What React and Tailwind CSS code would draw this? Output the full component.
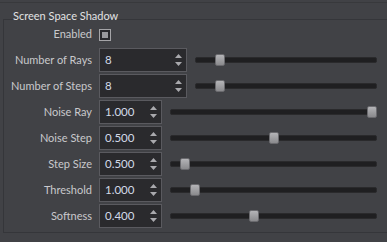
import React from "react";

const font = { fontFamily: "Lato, 'Liberation Sans', sans-serif" };

function Arrows() {
  return (
    <div className="flex flex-col justify-between h-full py-[5px] pr-[4px]">
      <svg width="7" height="4" viewBox="0 0 7 4"><path d="M0 4 L3.5 0 L7 4 Z" fill="#a9a9ad" /></svg>
      <svg width="7" height="4" viewBox="0 0 7 4"><path d="M0 0 L3.5 4 L7 0 Z" fill="#a9a9ad" /></svg>
    </div>
  );
}

function Spin({ value, wide }) {
  return (
    <div
      className={`flex items-center justify-between h-[24px] bg-[#2a2a2d] border border-[#5a5a5f] ${wide ? "w-[88px]" : "w-[63px]"}`}
    >
      <span className="pl-[5px] text-[11.5px] text-[#d3dae8]">{value}</span>
      <Arrows />
    </div>
  );
}

function Track({ frac }) {
  return (
    <div className="relative flex-1 h-[12px] flex items-center mr-[14px]">
      <div className="w-full h-[6px] bg-[#1f1f21] rounded-[2px] border border-[#2a2a2c]" />
      <div
        className="absolute top-0 h-[12px] w-[10px] rounded-[2px] border border-[#6a6a6e] bg-gradient-to-b from-[#b4b4b7] to-[#8a8a8d]"
        style={{ left: `calc((100% - 10px) * ${frac})` }}
      />
    </div>
  );
}

function Row({ label, value, wide, frac }) {
  return (
    <div className="flex items-center h-[26px]">
      <div className="w-[88px] text-right text-[11px] text-[#c9c9cc]">{label}</div>
      <div className="ml-[7px]">
        <Spin value={value} wide={wide} />
      </div>
      <div className="flex-1 flex ml-[8px]">
        <Track frac={frac} />
      </div>
    </div>
  );
}

export default function App() {
  return (
    <div className="w-[387px] h-[242px] bg-[#414246] overflow-hidden relative" style={font}>
      <div className="h-[2px]" />
      <div className="h-[1px] bg-[#38393c]" />
      <div className="pl-[13px] pt-[6px] h-[16px] text-[11px] leading-[14px] text-[#e2e2e4]">Screen Space Shadow</div>
      <div className="ml-[3px] w-[390px] h-[214px] border border-[#35363a]">
        <div className="flex items-center h-[27px] pt-[2px]">
          <div className="w-[88px] text-right text-[11px] text-[#c9c9cc]">Enabled</div>
          <div className="ml-[7px] w-[12px] h-[12px] border border-[#a5a5a8] bg-[#2a2a2d] p-[2px]">
            <div className="w-full h-full bg-[#9a9a9d]" />
          </div>
        </div>
        <div className="w-[387px]">
          <Row label="Number of Rays" value="8" wide frac={0.116} />
          <Row label="Number of Steps" value="8" wide frac={0.116} />
          <Row label="Noise Ray" value="1.000" frac={1} />
          <Row label="Noise Step" value="0.500" frac={0.5} />
          <Row label="Step Size" value="0.500" frac={0.05} />
          <Row label="Threshold" value="1.000" frac={0.1} />
          <Row label="Softness" value="0.400" frac={0.4} />
        </div>
      </div>
    </div>
  );
}
